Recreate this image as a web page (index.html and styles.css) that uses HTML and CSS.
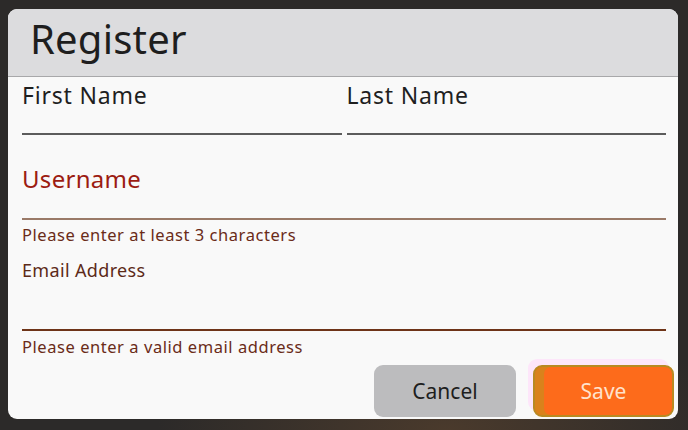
FILE: index.html
```html
<!DOCTYPE html>
<html>
<head>
<meta charset="utf-8">
<link rel="stylesheet" href="styles.css">
</head>
<body>
<div class="dialog">
  <div class="header"><h1 class="title">Register</h1></div>
  <div class="content">
    <div class="row">
      <div class="field">
        <label class="label">First Name</label>
        <div class="line"></div>
      </div>
      <div class="field">
        <label class="label">Last Name</label>
        <div class="line"></div>
      </div>
    </div>
    <div class="field user">
      <label class="label err-label">Username</label>
      <div class="line line-user"></div>
      <div class="error">Please enter at least 3 characters</div>
    </div>
    <div class="field email">
      <label class="label small-label">Email Address</label>
      <div class="line line-email"></div>
      <div class="error error2">Please enter a valid email address</div>
    </div>
    <div class="actions">
      <button class="btn cancel">Cancel</button>
      <button class="btn save">Save</button>
    </div>
  </div>
</div>
</body>
</html>
```
FILE: styles.css
```css
html, body {
  margin: 0;
  padding: 0;
}
body {
  width: 688px;
  height: 430px;
  background: radial-gradient(ellipse 60% 40% at 65% 100%, #4a3a2c 0%, #2c2a29 70%),
              linear-gradient(#3a3a3a, #262626 30%, #262626);
  font-family: "Noto Sans", "Open Sans", sans-serif;
  padding: 9px 10px 0 8px;
  box-sizing: border-box;
  overflow: hidden;
}
.dialog {
  width: 670px;
  height: 410px;
  background: #f9f9f9;
  border-radius: 9px;
  overflow: hidden;
  display: flex;
  flex-direction: column;
}
.header {
  height: 68px;
  box-sizing: border-box;
  background: #dcdcde;
  border-bottom: 1px solid #a8a8aa;
  padding: 6px 0 0 22px;
  flex: none;
}
.title {
  margin: 0;
  font-weight: 400;
  font-size: 40px;
  line-height: 48px;
  color: #1e1e1e;
  letter-spacing: 0.2px;
}
.content {
  padding: 4px 12px 0 14px;
  display: flex;
  flex-direction: column;
  flex: 1;
}
.row {
  display: grid;
  grid-template-columns: 1fr 1fr;
  column-gap: 5px;
}
.field {
  display: flex;
  flex-direction: column;
}
.label {
  font-size: 23px;
  letter-spacing: 0.8px;
  color: #1f1f1f;
  line-height: 28px;
  height: 28px;
}
.line {
  height: 2px;
  background: #5c5c5c;
  margin-top: 24px;
}
.user {
  margin-top: 29px;
}
.err-label {
  font-size: 24px;
  letter-spacing: 0.3px;
  line-height: 30px;
  height: 30px;
  color: #9c1c12;
}
.line-user {
  background: #9a7a68;
  margin-top: 24px;
}
.error {
  font-size: 16.5px;
  letter-spacing: 0.55px;
  color: #6a2b18;
  line-height: 20px;
  height: 20px;
  margin-top: 5px;
}
.error2 {
  margin-top: 6px;
}
.email {
  margin-top: 14px;
}
.small-label {
  font-size: 18px;
  letter-spacing: 0.35px;
  color: #5c2a18;
  line-height: 22px;
  height: 22px;
}
.line-email {
  background: #6e3418;
  margin-top: 48px;
}
.actions {
  display: flex;
  justify-content: flex-end;
  gap: 17px;
  margin-top: 8px;
  margin-right: -8px;
}
.btn {
  width: 142px;
  height: 52px;
  border-radius: 9px;
  font-family: "Noto Sans", "Open Sans", sans-serif;
  font-size: 21px;
  border: none;
  padding: 0;
}
.cancel {
  background: #bcbcbe;
  color: #1e1e1e;
}
.save {
  width: 141px;
  background: #fd6b1b;
  color: #ffe2cc;
  border: 2px solid #b88a22;
  box-shadow: inset 9px 0 0 #d9821c, -5px -6px 0 0 #fde6fa;
}
```
